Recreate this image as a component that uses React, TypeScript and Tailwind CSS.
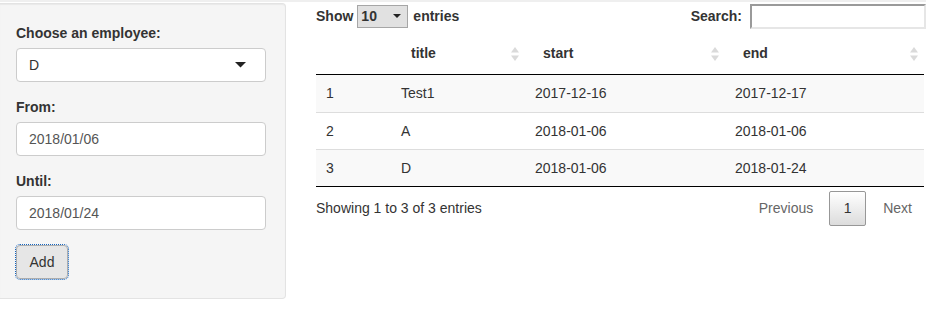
const rows = [
  { n: "1", title: "Test1", start: "2017-12-16", end: "2017-12-17" },
  { n: "2", title: "A", start: "2018-01-06", end: "2018-01-06" },
  { n: "3", title: "D", start: "2018-01-06", end: "2018-01-24" },
];

const cols = "grid grid-cols-[75px_134px_200px_199px]";

function SortIcon() {
  return (
    <svg width="8" height="14" viewBox="0 0 8 14" className="shrink-0">
      <path d="M4 0 L8 5.5 L0 5.5 Z" fill="#dadada" />
      <path d="M4 14 L8 8.5 L0 8.5 Z" fill="#dadada" />
    </svg>
  );
}

function Caret({ size = 10 }: { size?: number }) {
  return (
    <svg width={size} height={size / 2} viewBox="0 0 10 5">
      <path d="M0 0 L10 0 L5 5 Z" fill="#222" />
    </svg>
  );
}

function Field({ label, children }: { label: string; children: React.ReactNode }) {
  return (
    <div className="mb-[15px] flex flex-col">
      <label className="mb-[5px] text-[14px] font-bold leading-[20px] text-[#333]">{label}</label>
      {children}
    </div>
  );
}

function TextBox({ value }: { value: string }) {
  return (
    <div className="flex h-[34px] w-[250px] items-center rounded-[4px] border border-[#cccccc] bg-white px-[12px] text-[14px] text-[#555]">
      {value}
    </div>
  );
}

export default function App() {
  return (
    <div className="min-h-screen bg-white font-['Liberation_Sans',Arial,sans-serif] text-[14px] text-[#333]">
      <div className="h-[2px] w-[926px] bg-[#efefef]" />
      <div className="flex items-start">
        <div className="mt-[1px] w-[286px] rounded-r-[4px] border-y border-r border-[#e3e3e3] bg-[#f5f5f5] pb-[19px] pl-[16px] pr-[19px] pt-[19px] shadow-[inset_0_1px_1px_rgba(0,0,0,0.05)]">
          <Field label="Choose an employee:">
            <div className="flex h-[34px] w-[250px] items-center justify-between rounded-[4px] border border-[#cccccc] bg-white pl-[12px] pr-[19px] text-[14px] text-[#333]">
              <span>D</span>
              <Caret size={11} />
            </div>
          </Field>
          <Field label="From:">
            <TextBox value="2018/01/06" />
          </Field>
          <Field label="Until:">
            <TextBox value="2018/01/24" />
          </Field>
          <button className="h-[34px] w-[52px] rounded-[4px] border border-[#adadad] bg-[#e6e6e6] text-[14px] text-[#333] outline-1 outline-offset-0 outline-dotted outline-[#1565c0]">
            Add
          </button>
        </div>

        <div className="ml-[30px] flex w-[610px] flex-col">
          <div className="flex h-[28px] items-center justify-between">
            <div className="flex items-center gap-[4px] font-bold">
              <span>Show</span>
              <div className="flex h-[23px] w-[51px] items-center justify-between border border-[#a6a6a6] bg-[#e1e1e1] pl-[3px] pr-[6px]">
                <span>10</span>
                <Caret size={8} />
              </div>
              <span className="ml-[1px]">entries</span>
            </div>
            <div className="flex items-center gap-[8px] font-bold">
              <span>Search:</span>
              <div className="h-[25px] w-[176px] border-2 border-b-[#e6e6e6] border-l-[#9a9a9a] border-r-[#e6e6e6] border-t-[#9a9a9a] bg-white" />
            </div>
          </div>

          <div className="w-[608px]">
            <div className={`${cols} h-[45px] items-center border-b border-black pt-[3px] font-bold`}>
              <div />
              <div className="flex items-center justify-between pl-[20px] pr-[6px]">
                <span>title</span>
                <SortIcon />
              </div>
              <div className="flex items-center justify-between pl-[18px] pr-[6px]">
                <span>start</span>
                <SortIcon />
              </div>
              <div className="flex items-center justify-between pl-[18px] pr-[6px]">
                <span>end</span>
                <SortIcon />
              </div>
            </div>
            {rows.map((r, i) => (
              <div
                key={r.n}
                className={`${cols} h-[37px] items-center ${i === 0 ? "" : "border-t border-[#dddddd]"} ${i % 2 === 0 ? "bg-[#f9f9f9]" : "bg-white"}`}
              >
                <div className="pl-[10px]">{r.n}</div>
                <div className="pl-[10px]">{r.title}</div>
                <div className="pl-[10px]">{r.start}</div>
                <div className="pl-[10px]">{r.end}</div>
              </div>
            ))}
            <div className="h-px bg-black" />
          </div>

          <div className="mt-[4px] flex w-[608px] items-center justify-between">
            <span className="-mt-[1px]">Showing 1 to 3 of 3 entries</span>
            <div className="mr-[12px] flex items-center">
              <span className="px-[16px] text-[#666]">Previous</span>
              <span className="flex h-[35px] w-[37px] items-center justify-center rounded-[2px] border border-[#979797] bg-[linear-gradient(to_bottom,#ffffff_0%,#dcdcdc_100%)] text-[#333]">
                1
              </span>
              <span className="pl-[17px] text-[#666]">Next</span>
            </div>
          </div>
        </div>
      </div>
    </div>
  );
}
